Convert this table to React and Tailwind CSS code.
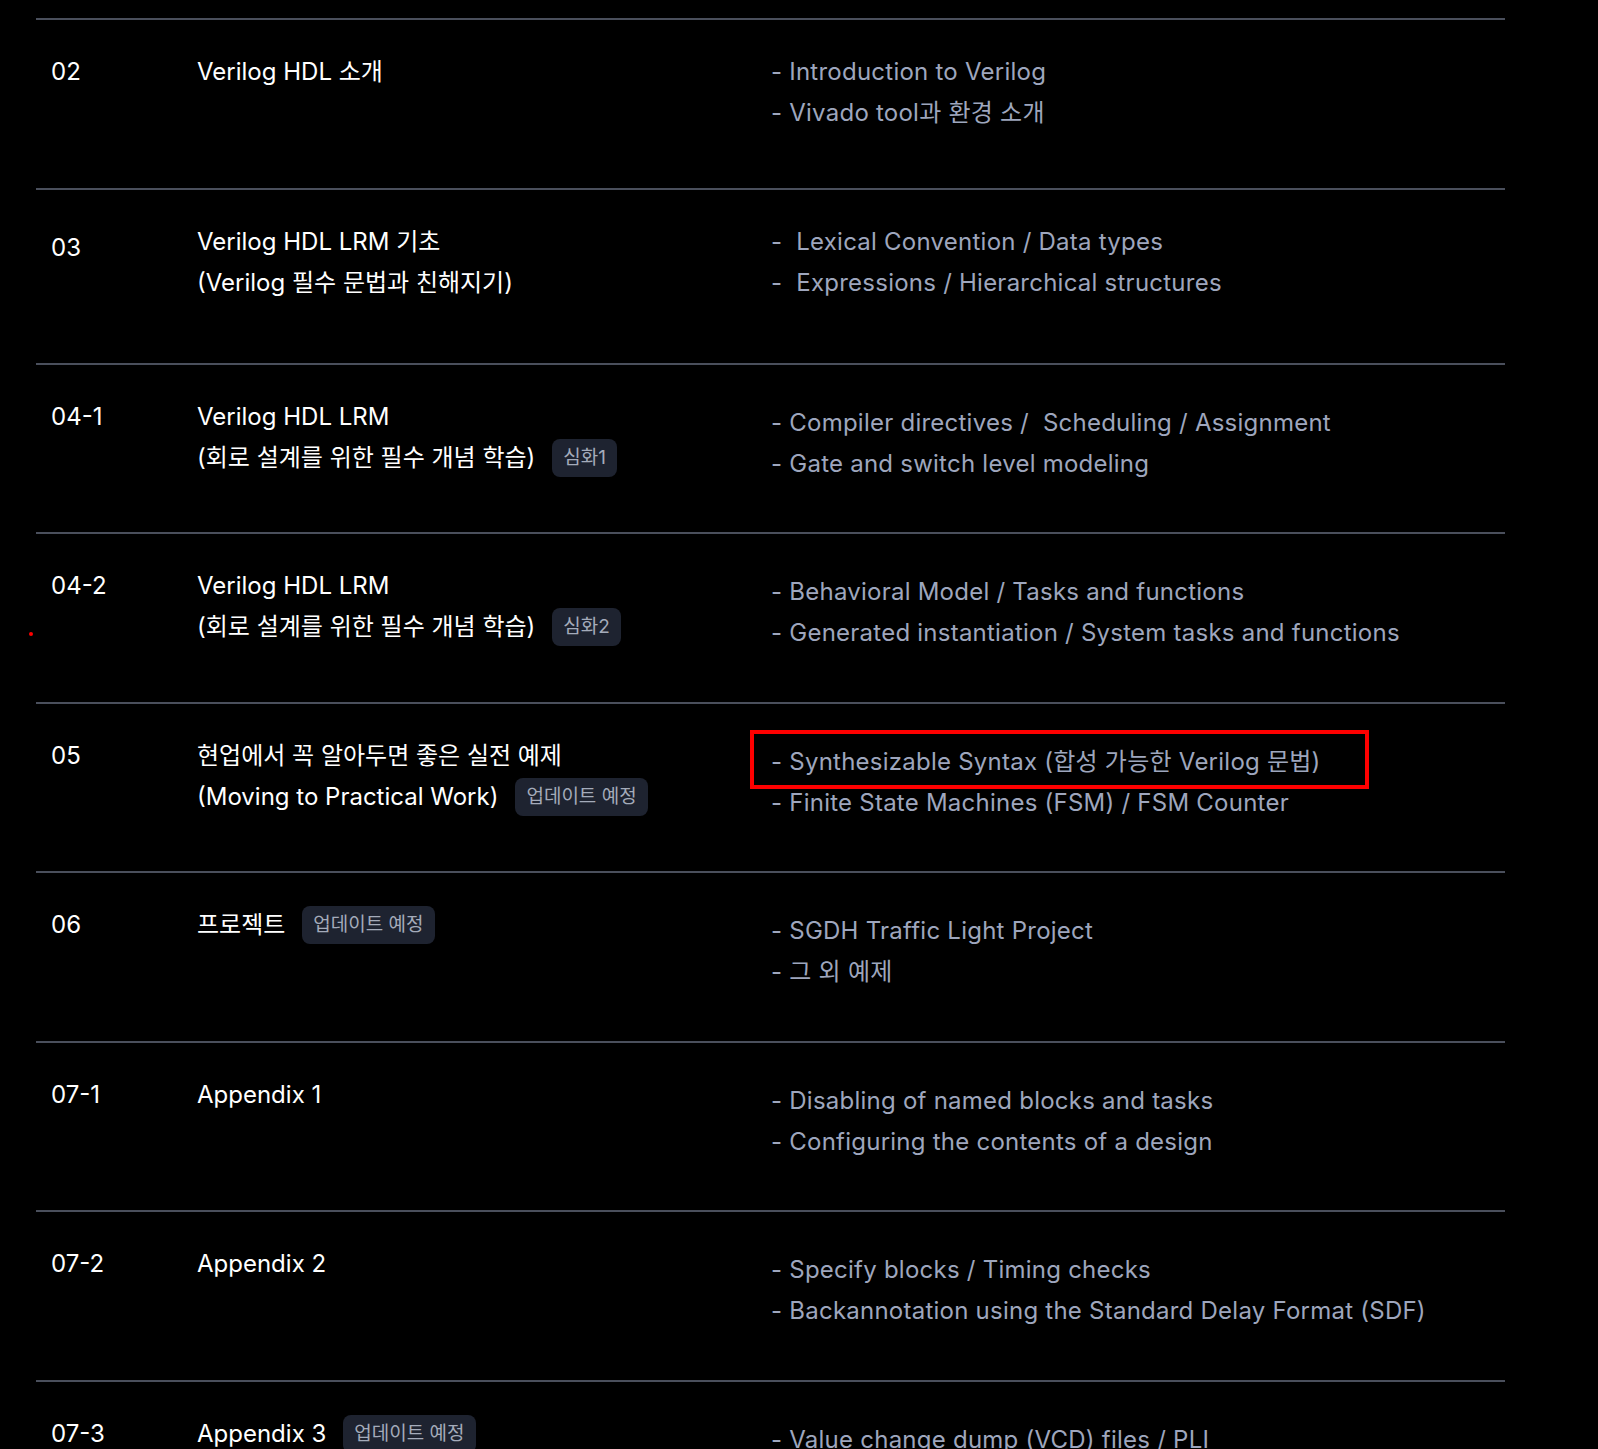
import React from 'react';

const rows = [
  {
    no: '02',
    h: 'h-[170px]',
    title: [{ text: 'Verilog HDL 소개' }],
    items: ['- Introduction to Verilog', '- Vivado tool과 환경 소개'],
    itemsLow: false,
  },
  {
    no: '03',
    h: 'h-[175px]',
    noLow: true,
    title: [{ text: 'Verilog HDL LRM 기초' }, { text: '(Verilog 필수 문법과 친해지기)' }],
    items: ['-  Lexical Convention / Data types', '-  Expressions / Hierarchical structures'],
    itemsLow: false,
  },
  {
    no: '04-1',
    h: 'h-[169px]',
    title: [{ text: 'Verilog HDL LRM' }, { text: '(회로 설계를 위한 필수 개념 학습)', badge: '심화1' }],
    items: ['- Compiler directives /  Scheduling / Assignment', '- Gate and switch level modeling'],
    itemsLow: true,
  },
  {
    no: '04-2',
    h: 'h-[170px]',
    title: [{ text: 'Verilog HDL LRM' }, { text: '(회로 설계를 위한 필수 개념 학습)', badge: '심화2' }],
    items: ['- Behavioral Model / Tasks and functions', '- Generated instantiation / System tasks and functions'],
    itemsLow: true,
  },
  {
    no: '05',
    h: 'h-[169px]',
    title: [{ text: '현업에서 꼭 알아두면 좋은 실전 예제' }, { text: '(Moving to Practical Work)', badge: '업데이트 예정' }],
    items: ['- Synthesizable Syntax (합성 가능한 Verilog 문법)', '- Finite State Machines (FSM) / FSM Counter'],
    itemsLow: true,
    marked: true,
  },
  {
    no: '06',
    h: 'h-[170px]',
    title: [{ text: '프로젝트', badge: '업데이트 예정' }],
    items: ['- SGDH Traffic Light Project', '- 그 외 예제'],
    itemsLow: true,
  },
  {
    no: '07-1',
    h: 'h-[169px]',
    title: [{ text: 'Appendix 1' }],
    items: ['- Disabling of named blocks and tasks', '- Configuring the contents of a design'],
    itemsLow: true,
  },
  {
    no: '07-2',
    h: 'h-[170px]',
    title: [{ text: 'Appendix 2' }],
    items: ['- Specify blocks / Timing checks', '- Backannotation using the Standard Delay Format (SDF)'],
    itemsLow: true,
  },
  {
    no: '07-3',
    h: 'h-[170px]',
    title: [{ text: 'Appendix 3', badge: '업데이트 예정' }],
    items: ['- Value change dump (VCD) files / PLI'],
    itemsLow: true,
  },
];

const Badge = ({ children }) => (
  <span className="ml-[17px] inline-flex h-[38px] items-center rounded-lg bg-[#1e2330] px-[11px] text-[19px] leading-none text-[#a4abba]">
    {children}
  </span>
);

const App = () => {
  return (
    <div
      className="relative h-[1449px] w-full overflow-hidden bg-black pt-[18px]"
      style={{ fontFamily: 'Inter, "Noto Sans CJK KR", sans-serif' }}
    >
      {/* stray red dot in the capture */}
      <span className="absolute left-[29px] top-[632px] h-[4px] w-[4px] rounded-full bg-[#ff0000]" />

      <div className="ml-[36px] w-[1469px]">
        {rows.map((row) => (
          <div
            key={row.no}
            className={`flex border-t-2 border-[#4a4f5c] pt-[31px] text-[24px] leading-[41px] ${row.h}`}
          >
            <div className={`w-[161px] shrink-0 pl-[15px] text-white ${row.noLow ? 'mt-[6px]' : ''}`}>
              {row.no}
            </div>
            <div className="w-[574px] shrink-0 text-white">
              {row.title.map((line, i) => (
                <div key={i} className="flex items-center whitespace-pre">
                  <span>{line.text}</span>
                  {line.badge && <Badge>{line.badge}</Badge>}
                </div>
              ))}
            </div>
            <div className={`relative tracking-[0.01em] text-[#9ea6bd] ${row.itemsLow ? 'mt-[6px]' : ''}`}>
              {row.marked && (
                <span className="absolute left-[-21px] top-[-11px] h-[59px] w-[619px] border-4 border-[#ff0000]" />
              )}
              {row.items.map((item, i) => (
                <div key={i} className="whitespace-pre">
                  {item}
                </div>
              ))}
            </div>
          </div>
        ))}
      </div>
    </div>
  );
};

export default App;
